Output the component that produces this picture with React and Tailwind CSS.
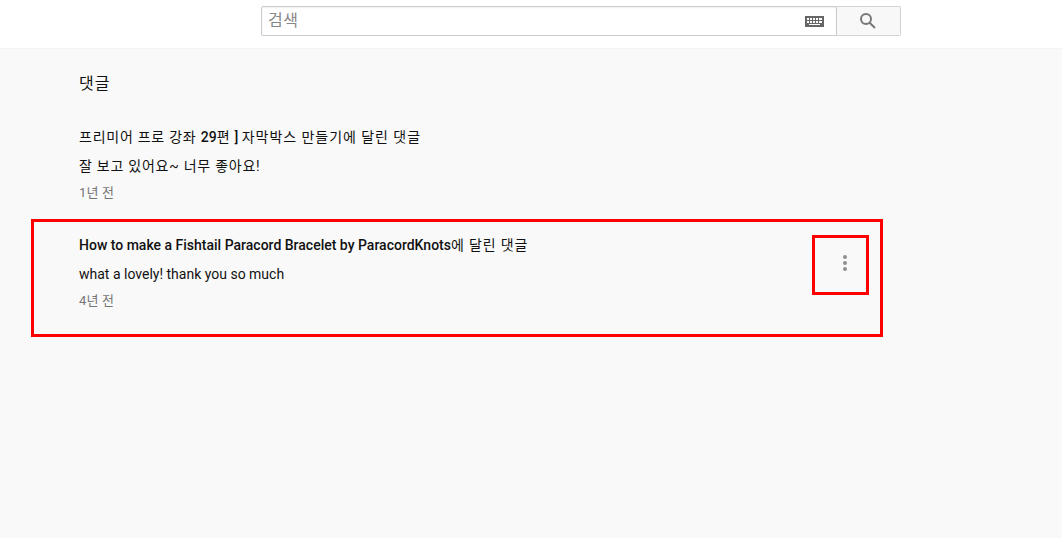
import React from 'react';

const font = "font-['Roboto','Noto_Sans_CJK_KR',sans-serif]";

const CommentBody = ({ title, text, textClass, time }) => (
  <div className="flex flex-col">
    <p className="h-[24px] text-[14px] leading-[24px] text-[#111]">{title}</p>
    <p className={`mt-[5px] h-[24px] text-[14px] leading-[24px] text-[#111] ${textClass}`}>{text}</p>
    <p className="mt-[5px] h-[20px] text-[13px] leading-[20px] tracking-[0.2px] text-[#767676]">{time}</p>
  </div>
);

const App = () => {
  return (
    <div className={`h-[538px] w-[1062px] overflow-hidden bg-[#f9f9f9] ${font}`}>
      <header className="flex h-[49px] border-b border-[#f4f4f4] bg-white pl-[261px] pt-[6px]">
        <div className="flex h-[30px] w-[576px] items-center justify-between rounded-l-[2px] border border-[#ccc] bg-white pl-[6px] pr-[12px] shadow-[inset_0_1px_2px_#eee]">
          <span className="text-[16px] leading-[20px] tracking-[0.5px] text-[#888]">검색</span>
          <svg width="19" height="11" viewBox="0 0 19 11">
            <rect width="19" height="11" fill="#666" />
            <g fill="#fff">
              <rect x="2" y="2" width="15" height="2" />
              <rect x="2" y="5" width="15" height="2" />
              <rect x="4" y="8" width="11" height="1" />
            </g>
            <g fill="#666">
              <rect x="4" y="2" width="1" height="5" />
              <rect x="7" y="2" width="1" height="5" />
              <rect x="10" y="2" width="1" height="5" />
              <rect x="13" y="2" width="1" height="5" />
            </g>
          </svg>
        </div>
        <button className="flex h-[30px] w-[64px] items-center justify-center rounded-r-[2px] border border-l-0 border-[#d3d3d3] bg-[#f8f8f8] pr-[2px]">
          <svg width="18" height="18" viewBox="0 0 18 18" fill="none" stroke="#777" strokeWidth="2">
            <circle cx="7" cy="7" r="5" />
            <path d="M10.7 10.7 16 16" />
          </svg>
        </button>
      </header>

      <main className="flex flex-col">
        <h2 className="ml-[79px] mt-[23px] h-[24px] text-[16px] leading-[24px] tracking-[1px] text-[#111]">댓글</h2>

        <div className="ml-[79px] mt-[29px]">
          <CommentBody
            title={
              <>
                <span className="tracking-[0.75px]">프리미어 프로 강좌 </span>
                <span className="font-medium">29</span>
                <span className="tracking-[0.75px]">편 </span>
                <span className="font-medium">] </span>
                <span className="tracking-[0.95px]">자막박스 만들기에 달린 댓글</span>
              </>
            }
            text="잘 보고 있어요~ 너무 좋아요!"
            textClass="tracking-[0.75px]"
            time="1년 전"
          />
        </div>

        <section className="ml-[31px] mt-[16px] flex h-[118px] w-[852px] justify-between border-[3px] border-[#ff0000] pl-[45px] pr-[11px] pt-[11px]">
          <CommentBody
            title={
              <>
                <span className="font-medium">How to make a Fishtail Paracord Bracelet by ParacordKnots</span>
                <span className="tracking-[0.85px]">에 달린 댓글</span>
              </>
            }
            text="what a lovely! thank you so much"
            textClass=""
            time="4년 전"
          />
          <div className="mt-[2px] flex h-[60px] w-[57px] items-center justify-center border-[3px] border-[#ff0000] pb-[4px] pl-[8px]">
            <div className="flex flex-col gap-[2px]">
              <span className="h-[4px] w-[4px] rounded-full bg-[#909090]" />
              <span className="h-[4px] w-[4px] rounded-full bg-[#909090]" />
              <span className="h-[4px] w-[4px] rounded-full bg-[#909090]" />
            </div>
          </div>
        </section>
      </main>
    </div>
  );
};

export default App;
